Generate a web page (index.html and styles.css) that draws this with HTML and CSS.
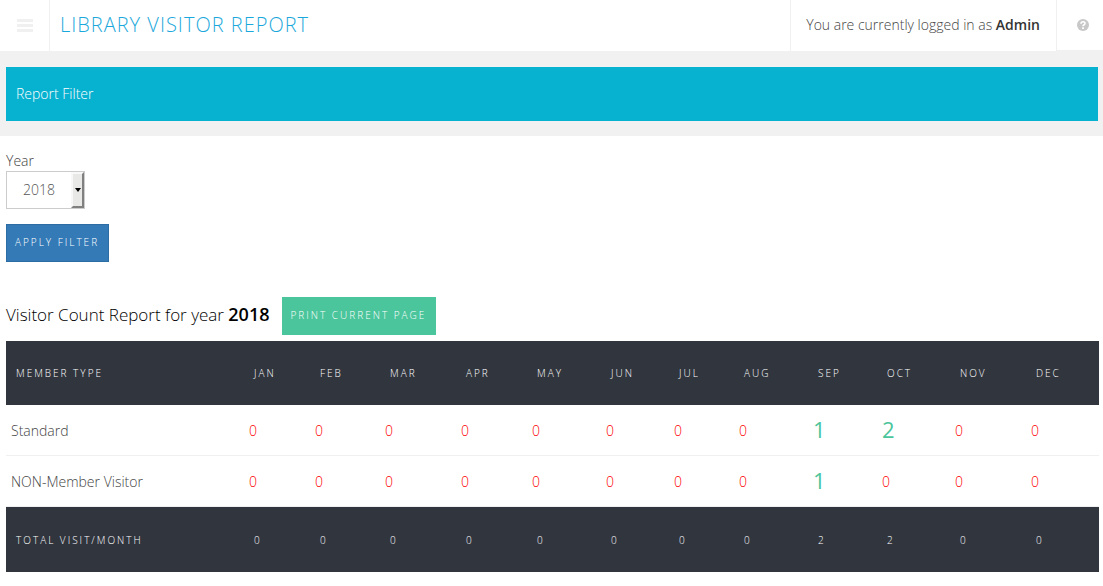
FILE: index.html
```html
<!DOCTYPE html>
<html lang="en">
<head>
<meta charset="utf-8">
<title>Library Visitor Report</title>
<link rel="stylesheet" href="styles.css">
</head>
<body>
<header class="topbar">
  <button class="menu-button" type="button" aria-label="Menu">
    <svg width="16" height="14" viewBox="0 0 16 14" aria-hidden="true"><path d="M0 0h16v3H0zM0 5h16v3H0zM0 10h16v3H0z" fill="#f0f0f0"/></svg>
  </button>
  <h1 class="page-title">Library Visitor Report</h1>
  <p class="login-info">You are currently logged in as <strong>Admin</strong></p>
  <a class="help-link" href="#" aria-label="Help">
    <svg width="12" height="12" viewBox="0 0 12 12" aria-hidden="true"><circle cx="6" cy="6" r="6" fill="#c8c8c8"/><path d="M4 4.7C4.1 2.1 8 2.2 8 4.4C8 5.8 6 5.7 6 7.3" fill="none" stroke="#fff" stroke-width="1.6"/><path d="M5.1 8.2h1.8v1.7H5.1z" fill="#fff"/></svg>
  </a>
</header>
<main>
  <div class="filter-band"><h2 class="filter-title">Report Filter</h2></div>
  <form class="filter-form">
    <label for="year">Year</label>
    <div class="select-box">
      <select id="year"><option>2018</option></select>
    </div>
    <button class="button button-blue" type="button">Apply Filter</button>
  </form>
  <section class="report">
    <div class="report-head">
      <h2 class="report-title">Visitor Count Report for year <strong>2018</strong></h2>
      <button class="button button-green" type="button">Print Current Page</button>
    </div>
    <table class="report-table">
      <colgroup>
        <col class="c-type"><col class="c-jan"><col class="c-feb"><col class="c-mar"><col class="c-apr"><col class="c-may"><col class="c-jun"><col class="c-jul"><col class="c-aug"><col class="c-sep"><col class="c-oct"><col class="c-nov"><col class="c-dec">
      </colgroup>
      <thead>
        <tr><th>Member Type</th><th>Jan</th><th>Feb</th><th>Mar</th><th>Apr</th><th>May</th><th>Jun</th><th>Jul</th><th>Aug</th><th>Sep</th><th>Oct</th><th>Nov</th><th>Dec</th></tr>
      </thead>
      <tbody>
        <tr><td>Standard</td><td class="none">0</td><td class="none">0</td><td class="none">0</td><td class="none">0</td><td class="none">0</td><td class="none">0</td><td class="none">0</td><td class="none">0</td><td class="some">1</td><td class="some">2</td><td class="none">0</td><td class="none">0</td></tr>
        <tr><td>NON-Member Visitor</td><td class="none">0</td><td class="none">0</td><td class="none">0</td><td class="none">0</td><td class="none">0</td><td class="none">0</td><td class="none">0</td><td class="none">0</td><td class="some">1</td><td class="none">0</td><td class="none">0</td><td class="none">0</td></tr>
      </tbody>
      <tfoot>
        <tr><th>Total visit/month</th><th>0</th><th>0</th><th>0</th><th>0</th><th>0</th><th>0</th><th>0</th><th>0</th><th>2</th><th>2</th><th>0</th><th>0</th></tr>
      </tfoot>
    </table>
  </section>
</main>
</body>
</html>
```
FILE: styles.css
```css
*, *::before, *::after { box-sizing: border-box; }
body {
  margin: 0;
  background: #fff;
  color: #444;
  font: 300 14px/20px "Open Sans", sans-serif;
}
h1, h2, p { margin: 0; font-weight: 300; }
strong { font-weight: 600; }
button, select { font-family: inherit; font-weight: 300; border-radius: 0; }

.topbar { display: flex; height: 51px; align-items: stretch; }
.menu-button {
  width: 50px;
  padding: 0;
  border: 0;
  border-right: 1px solid #f0f0f0;
  background: none;
}
.menu-button svg { display: block; margin: 0 auto; }
.page-title {
  flex: 1;
  padding-left: 10px;
  color: #1ba8dc;
  font-size: 20px;
  line-height: 50px;
  letter-spacing: 1px;
  text-transform: uppercase;
}
.login-info {
  padding: 0 16px 0 15px;
  border: solid #f0f0f0;
  border-width: 0 1px;
  line-height: 50px;
}
.login-info strong { color: #333; }
.help-link {
  display: flex;
  width: 46px;
  padding-left: 6px;
  align-items: center;
  justify-content: center;
  border-bottom: 1px solid #f0f0f0;
}

.filter-band { padding: 16px 5px 15px 6px; background: #f1f1f1; }
.filter-title {
  padding: 17px 10px;
  background: #07b1d0;
  color: #fff;
  font-size: 14px;
  line-height: 20px;
}
.filter-form {
  display: flex;
  flex-direction: column;
  align-items: flex-start;
  padding: 15px 6px 0;
}
.select-box { position: relative; margin-bottom: 15px; }
.select-box select {
  display: block;
  width: 79px;
  height: 38px;
  padding: 0 16px 2px;
  appearance: none;
  border: 1px solid #ccc;
  background: #fff;
  color: #555;
  font-size: 14px;
}
.select-box::before {
  content: "";
  position: absolute;
  top: 1px;
  right: 1px;
  width: 13px;
  height: 36px;
  border: 2px solid;
  border-color: #f8f8f8 #808080 #808080 #f8f8f8;
  background: #e8e8e6;
  pointer-events: none;
}
.select-box::after {
  content: "";
  position: absolute;
  top: 17px;
  right: 4px;
  border: solid transparent;
  border-width: 4px 3px 0;
  border-top-color: #000;
  pointer-events: none;
}
.button {
  height: 38px;
  padding: 0 9px 2px 8px;
  border: 1px solid;
  color: #fff;
  font-size: 10px;
  line-height: 20px;
  letter-spacing: 2px;
  text-transform: uppercase;
}
.button-blue { border-color: #2e6da4; background: #337ab7; }
.button-green { border-color: #4bc59b; background: #4bc59b; }

.report { padding: 35px 4px 0 6px; }
.report-head { display: flex; align-items: center; gap: 12px; margin-bottom: 6px; }
.report-title { padding-bottom: 4px; color: #000; font-size: 17px; line-height: 20px; }
.report-title strong { font-size: 18px; }

.report-table { width: 100%; table-layout: fixed; border-collapse: separate; border-spacing: 0; }
.report-table th {
  height: 64px;
  padding: 0 10px;
  background: #31353e;
  color: #fff;
  font-size: 10px;
  font-weight: 300;
  letter-spacing: 2px;
  text-align: left;
  text-transform: uppercase;
  white-space: nowrap;
}
.report-table tfoot th { height: 65px; }
.report-table td { height: 51px; padding: 1px 5px 0; border-bottom: 1px solid #f0f0f0; }
.report-table .none { color: #f00; }
.report-table .some { padding: 0 5px 2px; color: #4bc59b; font-size: 22px; font-weight: 400; }
.c-type { width: 238px; }
.c-jan { width: 66px; }
.c-feb { width: 70px; }
.c-mar { width: 76px; }
.c-apr { width: 71px; }
.c-may { width: 74px; }
.c-jun { width: 68px; }
.c-jul { width: 65px; }
.c-aug { width: 74px; }
.c-sep { width: 69px; }
.c-oct { width: 73px; }
.c-nov { width: 76px; }
.c-dec { width: 73px; }
```
